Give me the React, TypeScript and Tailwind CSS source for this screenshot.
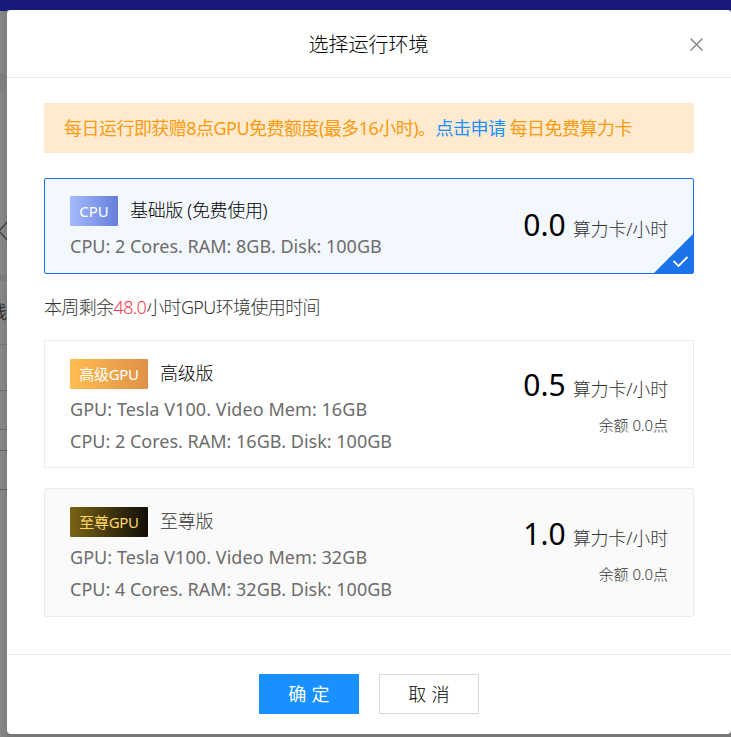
import React from "react";

type Plan = {
  tag: string;
  name: string;
  specs: { text: string; className: string }[];
  price: string;
  tagClass: string;
  disabled?: boolean;
};

const plans: Plan[] = [
  {
    tag: "高级GPU",
    name: "高级版",
    specs: [
      { text: "GPU: Tesla V100. Video Mem: 16GB", className: "tracking-[0.06px]" },
      { text: "CPU: 2 Cores. RAM: 16GB. Disk: 100GB", className: "tracking-[0px]" },
    ],
    price: "0.5",
    tagClass: "from-[#ffbd52] to-[#df9146] text-white",
  },
  {
    tag: "至尊GPU",
    name: "至尊版",
    specs: [
      { text: "GPU: Tesla V100. Video Mem: 32GB", className: "tracking-[0.06px]" },
      { text: "CPU: 4 Cores. RAM: 32GB. Disk: 100GB", className: "tracking-[0px]" },
    ],
    price: "1.0",
    tagClass: "from-[#7b6415] to-[#120f06] text-[#ffd666]",
    disabled: true,
  },
];

function Price({ value, balance }: { value: string; balance?: boolean }) {
  return (
    <div className="flex flex-col items-end whitespace-nowrap">
      <div className="flex items-baseline gap-[7px] leading-[40px]">
        <span className="text-[30px] text-black">{value}</span>
        <span className="text-[18px] font-light tracking-[-0.15px] text-[#333]">算力卡/小时</span>
      </div>
      {balance && <span className="mt-1 text-[15px] leading-6 font-light tracking-[-0.05px] text-[#333]">余额 0.0点</span>}
    </div>
  );
}

// The sliver of the dimmed page that stays visible beside the dialog.
function PageEdge() {
  return (
    <div className="flex h-[727px] w-[7px] shrink-0 flex-col overflow-hidden bg-linear-to-r from-[#888] to-[#7e7e7e]">
      <div className="h-px shrink-0 bg-[#171a7a]" />
      <div className="mt-[62px] h-5 shrink-0 bg-[#7d7d7d]" />
      <svg className="mt-[128px] h-[20px] w-[7px] shrink-0" viewBox="0 0 7 20" fill="none" stroke="#333" strokeWidth="1.3">
        <path d="M8 0L-1 10l9 10" />
      </svg>
      <div className="mt-[34px] h-[6px] shrink-0 bg-[#7c7c7c]" />
      <div className="mt-[21px] flex h-5 shrink-0 justify-end text-[18px] leading-5 text-[#333]">线</div>
      <div className="mt-[22px] h-px shrink-0 bg-[#747474]" />
      <div className="mt-[45px] h-px shrink-0 bg-[#686868]" />
      <div className="mt-[38px] h-px shrink-0 bg-[#686868]" />
      <div className="mt-[20px] h-px shrink-0 bg-[#5e5e5e]" />
      <div className="mt-[38px] h-px shrink-0 bg-[#5e5e5e]" />
    </div>
  );
}

export default function App() {
  return (
    <div className="flex h-[737px] w-[731px] flex-col overflow-hidden bg-[#797979] font-['Noto_Sans','Noto_Sans_CJK_SC',sans-serif]">
      <div className="h-[10px] shrink-0 bg-[#171a7a]" />
      <div className="flex h-[727px]">
        <PageEdge />
        <div className="flex h-[724px] w-[724px] flex-col rounded-[4px] bg-white">
          <header className="flex h-[68px] items-center border-b border-[#ebebeb] pt-px pr-[28px] pl-[37px]">
            <h1 className="flex-1 pt-[2px] pl-[3px] text-center text-[20px] font-light text-black">选择运行环境</h1>
            <svg className="size-[13px]" viewBox="0 0 13 13" stroke="#888" strokeWidth="1.5">
              <path d="M.5 .5l12 12M12.5 .5l-12 12" />
            </svg>
          </header>
          <main className="flex h-[576px] flex-col pt-[25px] pl-[37px]">
            <div className="flex h-[50px] w-[650px] items-center bg-[#fdeacf] pt-px pl-5 text-[18px] tracking-[-0.53px] whitespace-nowrap text-[#fa9b10]">
              每日运行即获赠8点GPU免费额度(最多16小时)。<span className="text-[#1890ff]">点击申请</span>&nbsp;每日免费算力卡
            </div>
            <section className="relative mt-[25px] flex h-[96px] w-[650px] justify-between rounded-[2px] border border-[#1a73e8] bg-[#f3f7fe] pt-[17px] pr-[25px] pl-[25px]">
              <div>
                <div className="flex h-[30px] items-center gap-3">
                  <span className="flex h-[30px] w-12 items-center justify-center rounded-[1px] bg-linear-to-r from-[#a5bbff] to-[#667fda] text-[15px] text-white">CPU</span>
                  <span className="pb-px text-[18px] font-light tracking-[-0.35px] text-black">基础版 (免费使用)</span>
                </div>
                <p className="mt-1 text-[18px] leading-8 tracking-[0px] text-[#6c6c6c]">CPU: 2 Cores. RAM: 8GB. Disk: 100GB</p>
              </div>
              <div className="pt-[9px]"><Price value="0.0" /></div>
              <svg className="absolute right-0 bottom-0 size-[39px]" viewBox="0 0 39 39">
                <path d="M39 0v39H0z" fill="#1a73e8" />
                <path d="M19.5 27l5 5 9-9" fill="none" stroke="#fff" strokeWidth="1.8" />
              </svg>
            </section>
            <p className="mt-[17px] h-8 text-[18px] leading-8 font-light tracking-[-0.63px] text-[#333]">
              本周剩余<span className="text-[#f5374b]">48.0</span>小时GPU环境使用时间
            </p>
            <div className="mt-[17px] flex flex-col gap-5">
              {plans.map((plan) => (
                <section key={plan.tag} className={`flex w-[650px] justify-between rounded-[2px] border border-[#ebebeb] px-[25px] pt-[18px] ${plan.disabled ? "h-[129px] bg-[#fafafa]" : "h-[128px]"}`}>
                  <div>
                    <div className="flex h-[30px] items-center gap-3">
                      <span className={`flex h-[30px] w-[78px] items-center justify-center rounded-[1px] bg-linear-to-r text-[15px] tracking-[-0.3px] ${plan.tagClass}`}>{plan.tag}</span>
                      <span className={`pb-px text-[18px] font-light tracking-[-0.3px] ${plan.disabled ? "text-[#333]" : "text-black"}`}>{plan.name}</span>
                    </div>
                    <div className="mt-1 text-[18px] leading-8 text-[#6c6c6c]">
                      {plan.specs.map((s) => <p key={s.text} className={s.className}>{s.text}</p>)}
                    </div>
                  </div>
                  <div className={plan.disabled ? "pt-[7px]" : "pt-[6px]"}><Price value={plan.price} balance /></div>
                </section>
              ))}
            </div>
          </main>
          <footer className="flex h-[80px] items-center justify-center gap-5 border-t border-[#ebebeb] pb-[2px]">
            <button className="h-10 w-[100px] bg-[#1890ff] pt-[2px] text-[18px] tracking-[0.2px] text-white">确 定</button>
            <button className="h-10 w-[100px] border border-[#d9d9d9] pt-[2px] text-[18px] font-light tracking-[0.2px] text-black shadow-[0_2px_0_rgba(0,0,0,0.015)]">取 消</button>
          </footer>
        </div>
      </div>
    </div>
  );
}
